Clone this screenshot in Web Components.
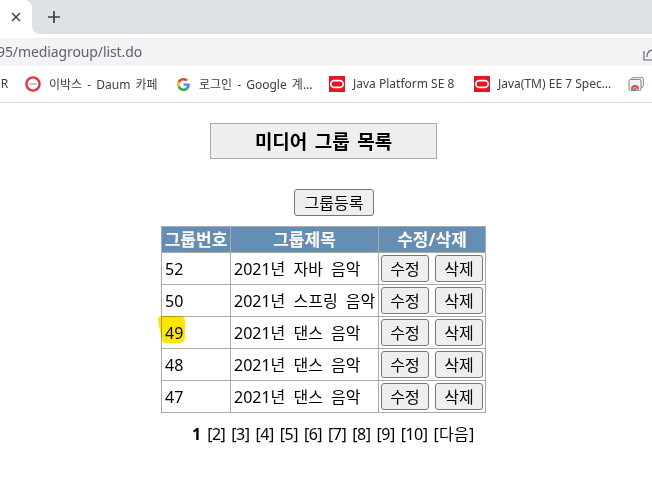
<!DOCTYPE html>
<html lang="ko">
<head>
<meta charset="utf-8">
<title>미디어 그룹 목록</title>
<style>
    html, body { margin: 0; padding: 0; background: #fff; overflow: hidden; }
    body { width: 652px; height: 491px; font-family: "Noto Sans", "Noto Sans CJK KR", sans-serif; }
    media-page { display: block; }
    .register { display: flex; justify-content: center; margin-top: 30px; padding-left: 16px; }
</style>
</head>
<body>
<browser-chrome></browser-chrome>
<media-page>
    <page-title>미디어 그룹 목록</page-title>
    <div class="register">
        <page-button wide>그룹등록</page-button>
    </div>
    <group-table></group-table>
    <page-nav></page-nav>
</media-page>

<script>
(function() {
    'use strict';

    const oracleIcon = `
        <svg width="16" height="16" viewBox="0 0 16 16">
            <rect width="16" height="16" fill="#e8141f"></rect>
            <rect x="1.8" y="4.6" width="12.4" height="6.8" rx="3.4" fill="none" stroke="#fff" stroke-width="1.7"></rect>
        </svg>`;

    class BrowserChrome extends HTMLElement {
        constructor() {
            super();
            this.attachShadow({ mode: 'open' });
        }

        connectedCallback() {
            this.shadowRoot.innerHTML = `
                <style>
                    :host { display: block; font-family: "Noto Sans", "Noto Sans CJK KR", sans-serif; }
                    .tabs { height: 34px; background: #dee1e6; display: flex; }
                    .tab {
                        width: 32px; background: #fff; border-top-right-radius: 8px;
                        display: flex; align-items: center; justify-content: center;
                    }
                    .new-back { width: 44px; background: #fff; display: flex; }
                    .new {
                        flex: 1; background: #dee1e6; border-bottom-left-radius: 8px;
                        display: flex; align-items: center; justify-content: center;
                    }
                    .gap { height: 4px; background: #fff; }
                    .address {
                        height: 28px; background: #f1f3f4; color: #5f6368; font-size: 14px;
                        display: flex; align-items: center; justify-content: space-between; overflow: hidden;
                    }
                    .address span { margin-left: -3px; margin-top: -1px; letter-spacing: -0.1px; }
                    .address svg { margin-right: -7px; margin-top: 2px; }
                    .bookmarks {
                        height: 36px; border-bottom: 1px solid #dadce0;
                        display: flex; align-items: center; font-size: 12px; color: #3c4043;
                        white-space: nowrap; overflow: hidden;
                    }
                    .bookmarks span { margin-top: -1px; }
                    .cut { margin-left: -6px; width: 31px; }
                    .item { display: flex; align-items: center; gap: 8px; }
                    .item svg { flex-shrink: 0; }
                    .ko { word-spacing: 2px; }
                </style>
                <div class="tabs">
                    <div class="tab">
                        <svg width="10" height="10" viewBox="0 0 10 10"><path d="M1 1l8 8M9 1l-8 8" stroke="#45494e" stroke-width="1.6"></path></svg>
                    </div>
                    <div class="new-back">
                        <div class="new">
                            <svg width="14" height="14" viewBox="0 0 14 14"><path d="M7 1v12M1 7h12" stroke="#3c4043" stroke-width="1.7"></path></svg>
                        </div>
                    </div>
                </div>
                <div class="gap"></div>
                <div class="address">
                    <span>95/mediagroup/list.do</span>
                    <svg width="16" height="16" viewBox="0 0 16 16" fill="none" stroke="#5f6368" stroke-width="1.1">
                        <path d="M1 6v9h13"></path><path d="M4 12c0-5 3-7 7-7V2l5 5"></path>
                    </svg>
                </div>
                <div class="bookmarks">
                    <span class="cut">ER</span>
                    <div class="item ko" style="width:152px">
                        <svg width="16" height="16" viewBox="0 0 16 16">
                            <circle cx="8" cy="8" r="6.6" fill="#fff" stroke="#e8323c" stroke-width="2.4"></circle>
                            <rect x="4.500" y="7.200" width="7" height="1.600" fill="#efa5a9"></rect>
                        </svg>
                        <span>이박스 - Daum 카페</span>
                    </div>
                    <div class="item ko" style="width:152px;gap:9px">
                        <svg width="13" height="13" viewBox="0 0 48 48">
                            <path fill="#ea4335" d="M24 9.500c3.500 0 6.700 1.200 9.200 3.600l6.900-6.900C35.900 2.400 30.500 0 24 0 14.600 0 6.500 5.400 2.600 13.200l8 6.200C12.500 13.700 17.800 9.500 24 9.500z"></path>
                            <path fill="#4285f4" d="M47 24.500c0-1.600-.1-3.100-.4-4.500H24v9h12.900c-.6 3-2.200 5.400-4.800 7.100l7.700 6c4.500-4.200 7.200-10.300 7.200-17.600z"></path>
                            <path fill="#fbbc05" d="M10.600 28.600c-.5-1.400-.8-3-.8-4.600s.3-3.200.8-4.600l-8-6.200C.9 16.500 0 20.100 0 24s.9 7.500 2.600 10.800l8-6.200z"></path>
                            <path fill="#34a853" d="M24 48c6.500 0 11.900-2.100 15.800-5.800l-7.700-6c-2.100 1.400-4.900 2.300-8.100 2.300-6.200 0-11.500-4.200-13.400-9.900l-8 6.200C6.500 42.600 14.600 48 24 48z"></path>
                        </svg>
                        <span>로그인 - Google 계...</span>
                    </div>
                    <div class="item" style="width:145px">${oracleIcon}<span>Java Platform SE 8</span></div>
                    <div class="item" style="width:154px">${oracleIcon}<span>Java(TM) EE 7 Spec...</span></div>
                    <svg width="16" height="16" viewBox="0 0 16 16">
                        <rect x="3.500" y="1.500" width="12" height="10" rx="1.500" fill="#e8eaed" stroke="#9aa0a6"></rect>
                        <rect x="1" y="3.500" width="12" height="11" rx="1.500" fill="#f1f3f4" stroke="#80868b"></rect>
                        <path d="M3 13a4 4 0 0 1 8 0H9a2 2 0 0 0-4 0z" fill="#ea4335"></path>
                        <path d="M3 13h2l1 1.500H4z" fill="#34a853"></path>
                        <path d="M9 13h2l-1 1.500H8z" fill="#fbbc05"></path>
                        <circle cx="7" cy="13" r="1.400" fill="#4285f4"></circle>
                    </svg>
                </div>`;
        }
    }

    class PageTitle extends HTMLElement {
        constructor() {
            super();
            this.attachShadow({ mode: 'open' });
        }

        connectedCallback() {
            this.shadowRoot.innerHTML = `
                <style>
                    :host {
                        display: flex; align-items: center; justify-content: center;
                        box-sizing: border-box; width: 227px; height: 36px; margin: 20px 0 0 210px;
                        background: #eee; border: 1px solid #aaa; color: #000;
                        font: 700 19px "Noto Sans", "Noto Sans CJK KR", sans-serif;
                        word-spacing: 2.5px;
                    }
                </style>
                <slot></slot>`;
        }
    }

    class PageButton extends HTMLElement {
        constructor() {
            super();
            this.attachShadow({ mode: 'open' });
        }

        connectedCallback() {
            this.shadowRoot.innerHTML = `
                <style>
                    :host { display: inline-flex; }
                    button {
                        box-sizing: border-box; width: 48px; height: 27px; padding: 0;
                        background: #efefef; border: 1px solid #767676; border-radius: 3px; color: #000;
                        font: 16px "Noto Sans", "Noto Sans CJK KR", sans-serif; line-height: 1;
                    }
                    :host([wide]) button { width: 80px; }
                </style>
                <button><slot></slot></button>`;
        }
    }

    class GroupTable extends HTMLElement {
        constructor() {
            super();
            this.attachShadow({ mode: 'open' });
            this.rows = [
                ['52', '2021년 자바 음악'],
                ['50', '2021년 스프링 음악'],
                ['49', '2021년 댄스 음악'],
                ['48', '2021년 댄스 음악'],
                ['47', '2021년 댄스 음악']
            ];
        }

        connectedCallback() {
            // yellow marker drawn over the "49" cell, multiply keeps the text and grid lines visible
            const mark = `
                <svg class="mark" width="27" height="27" viewBox="0 0 27 27">
                    <path d="M3 0H22Q27 0 27 5V21Q27 27 21 27H8Q4 27 3.500 23L0 4Q0 0 3 0z" fill="#ffe600"></path>
                </svg>`;
            const body = this.rows.map(([no, name]) => `
                <tr>
                    <td class="no"><span>${no}</span>${no === '49' ? mark : ''}</td>
                    <td>${name}</td>
                    <td class="act"><div><page-button>수정</page-button><page-button>삭제</page-button></div></td>
                </tr>`).join('');
            this.shadowRoot.innerHTML = `
                <style>
                    :host { display: block; width: 325px; margin: 10px 0 0 161px; }
                    table {
                        width: 324px; table-layout: fixed; border-collapse: collapse;
                        font: 16px "Noto Sans", "Noto Sans CJK KR", sans-serif; color: #000;
                        word-spacing: 4px;
                    }
                    th, td { border: 1px solid #aaa; padding: 0; box-sizing: border-box; white-space: nowrap; }
                    th { height: 26px; background: #668db3; color: #fff; font-weight: 700; font-size: 17px; line-height: 1; }
                    td { height: 32px; padding-left: 3px; line-height: 1; }
                    .act { padding: 0; }
                    .act div { display: flex; gap: 6px; padding-left: 2px; }
                    .no { position: relative; }
                    .mark { position: absolute; left: -4px; top: -1px; mix-blend-mode: multiply; }
                </style>
                <table>
                    <colgroup><col style="width:69px"><col style="width:148px"><col style="width:107px"></colgroup>
                    <thead><tr><th>그룹번호</th><th>그룹제목</th><th>수정/삭제</th></tr></thead>
                    <tbody>${body}</tbody>
                </table>`;
        }
    }

    class PageNav extends HTMLElement {
        constructor() {
            super();
            this.attachShadow({ mode: 'open' });
        }

        connectedCallback() {
            const links = ['[2]', '[3]', '[4]', '[5]', '[6]', '[7]', '[8]', '[9]', '[10]'];
            this.shadowRoot.innerHTML = `
                <style>
                    :host {
                        display: flex; gap: 6px; margin: 10px 0 0 192px;
                        font: 16px/22px "Noto Sans", "Noto Sans CJK KR", sans-serif; color: #000;
                    }
                    b { font-weight: 700; }
                    span { letter-spacing: -0.5px; }
                    .next { letter-spacing: 0.25px; }
                </style>
                <b>1</b>${links.map(l => `<span>${l}</span>`).join('')}<span class="next">[다음]</span>`;
        }
    }

    customElements.define('browser-chrome', BrowserChrome);
    customElements.define('page-title', PageTitle);
    customElements.define('page-button', PageButton);
    customElements.define('group-table', GroupTable);
    customElements.define('page-nav', PageNav);
})();
</script>
</body>
</html>
